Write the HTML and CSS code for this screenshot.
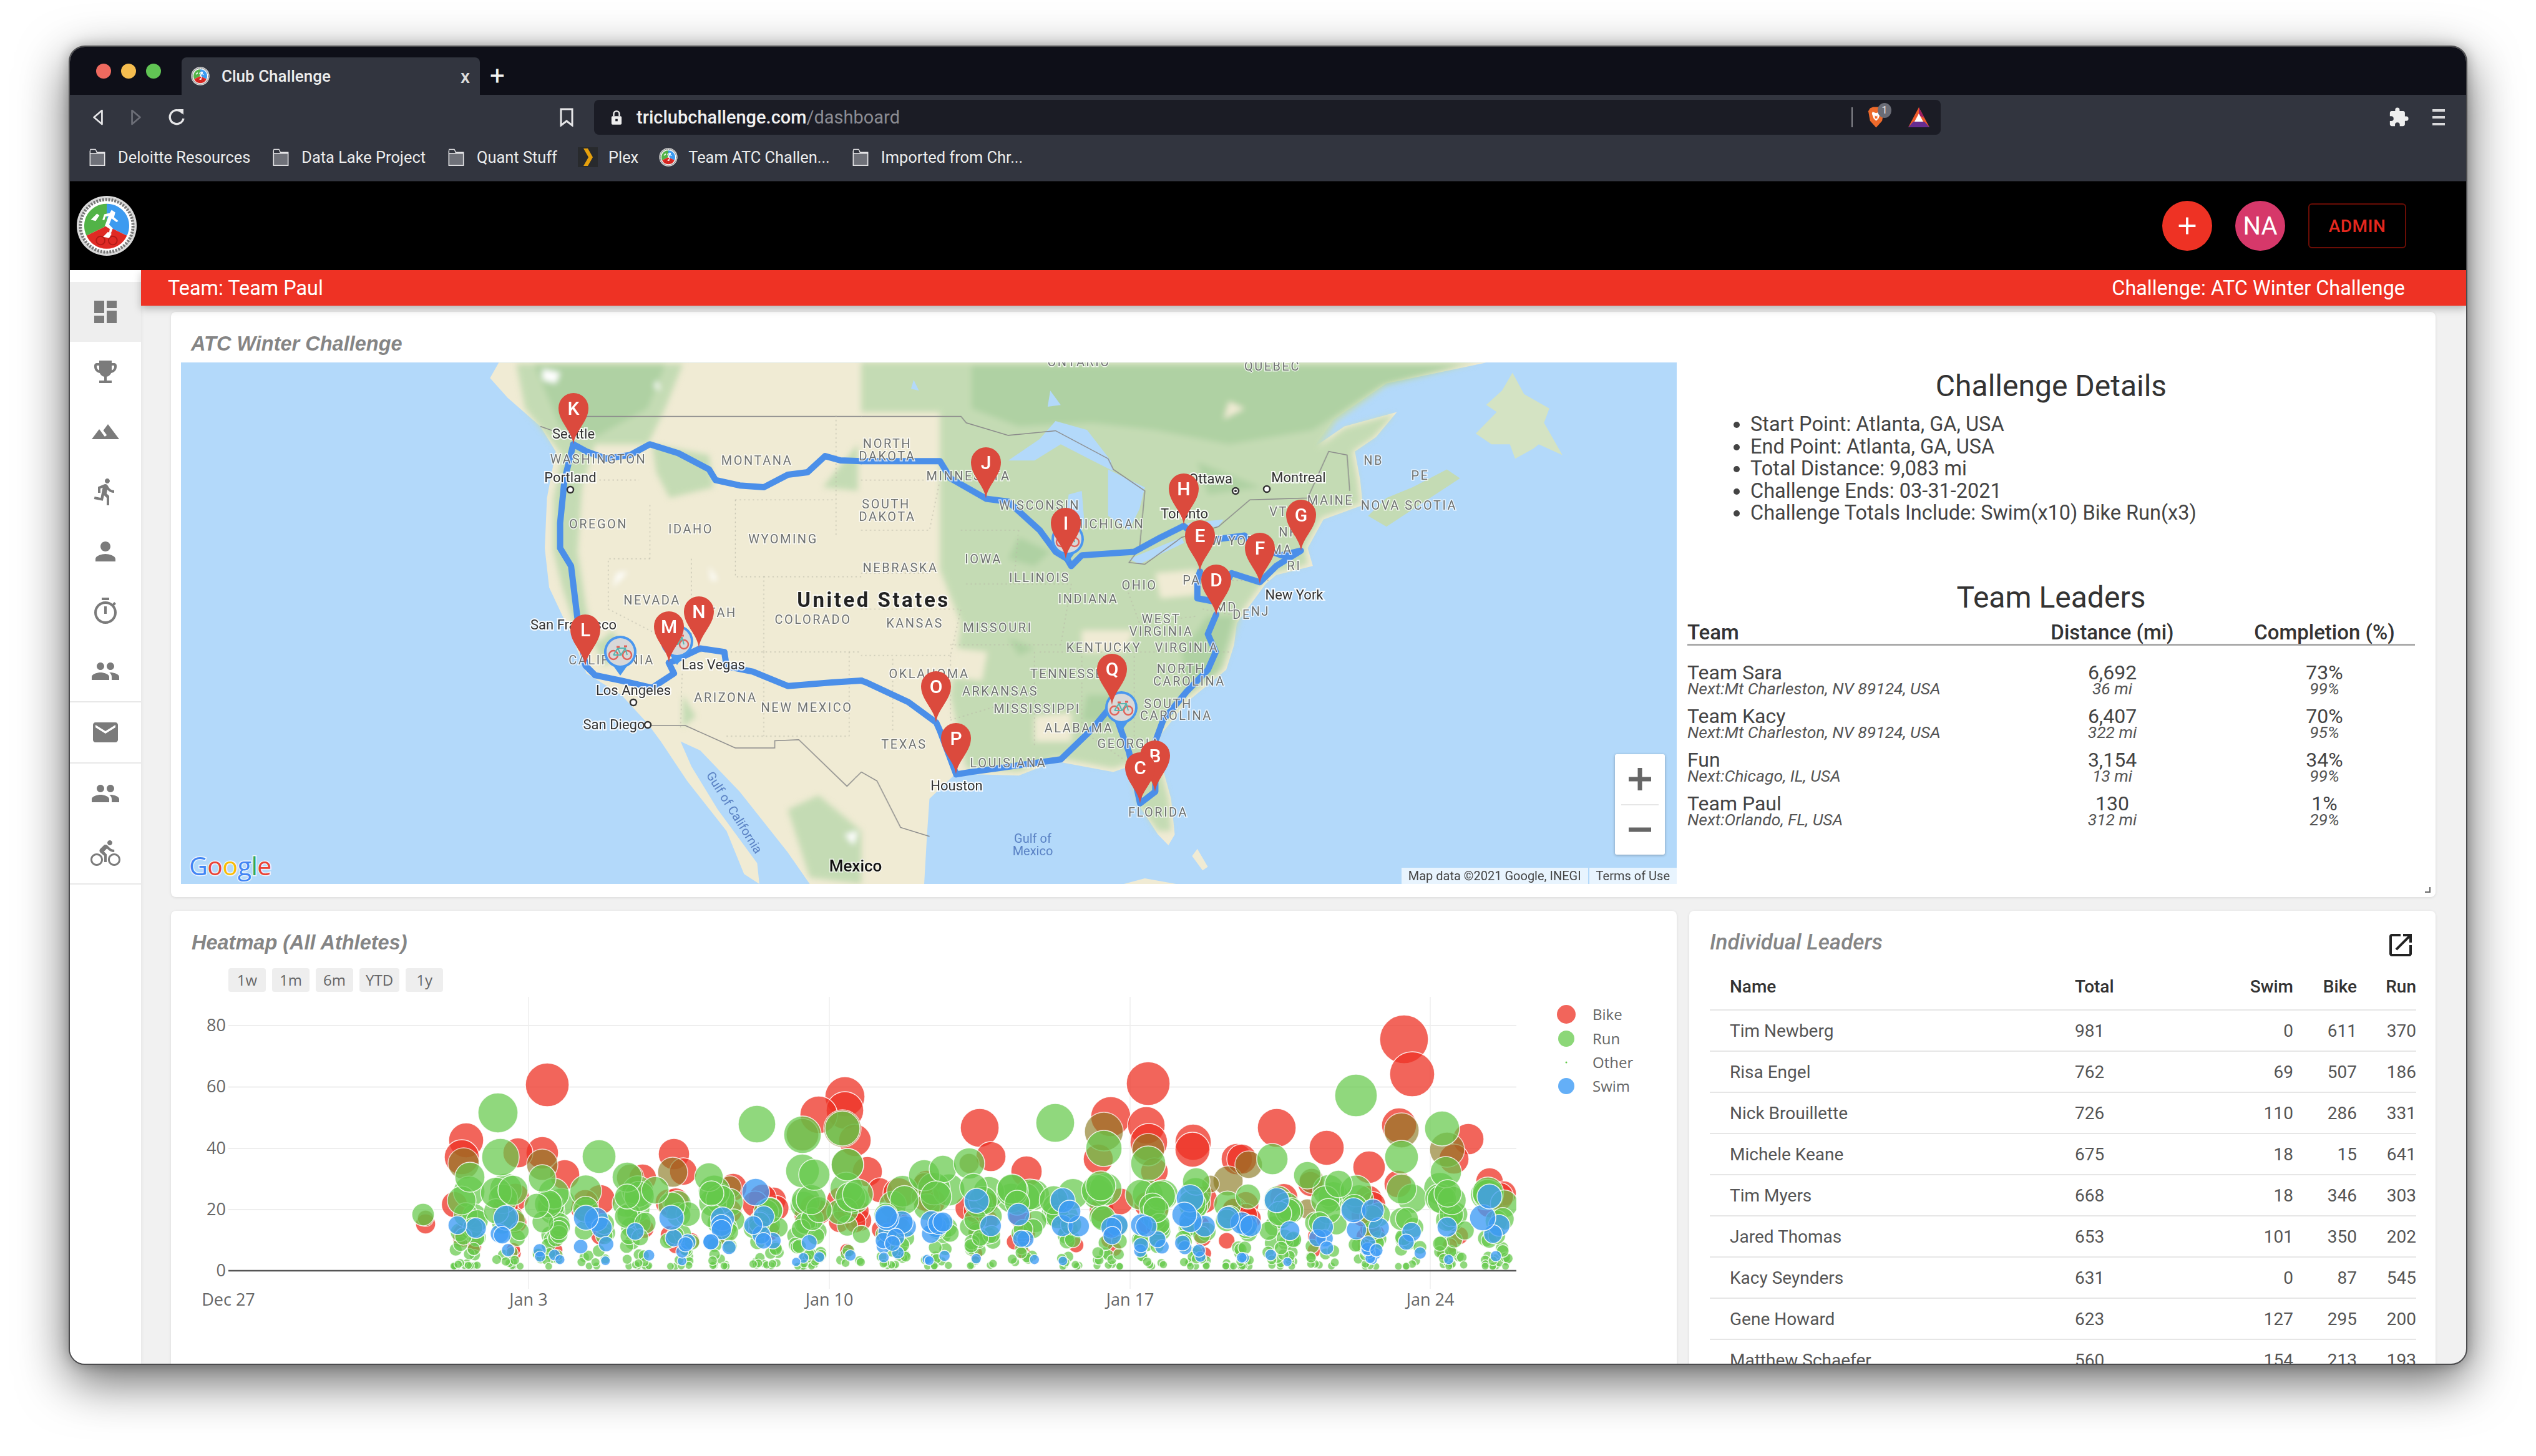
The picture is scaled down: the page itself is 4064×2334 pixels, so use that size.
FILE: index.html
```html
<!DOCTYPE html>
<html lang="en">
<head>
<meta charset="utf-8">
<title>Club Challenge</title>
<link rel="stylesheet" href="styles.css">
</head>
<body>
<svg class="defs" width="0" height="0" aria-hidden="true">
  <defs>
    <symbol id="atc" viewBox="0 0 100 100">
      <circle cx="50" cy="50" r="49" fill="#d9d9d9"/>
      <circle cx="50" cy="50" r="43" fill="#fff"/>
      <circle cx="50" cy="50" r="43" fill="none" stroke="#777" stroke-width="5" stroke-dasharray="3 2"/>
      <path d="M50 14 A36 36 0 0 0 17 66 L50 50Z" fill="#52b347"/>
      <path d="M50 14 A36 36 0 0 1 83 66 L50 50Z" fill="#3d9bf0"/>
      <path d="M17 66 A36 36 0 0 0 83 66 L50 50Z" fill="#df2a24"/>
      <path d="M58 24l6 4-2 8 7 6-3 2-8-6-4 10 6 6-3 8-3-1 1-6-8-5 6-16-5 1-2 6-3-1 3-9 9-2z" fill="#fff"/>
      <path d="M24 40l10-10 4 3-6 9z" fill="#fff"/>
      <circle cx="40" cy="74" r="7" fill="none" stroke="#b31b16" stroke-width="2"/>
      <circle cx="60" cy="74" r="7" fill="none" stroke="#b31b16" stroke-width="2"/>
      <path d="M44 68l8-8 6 3-4 7z" fill="#fff"/>
    </symbol>
    <symbol id="folder" viewBox="0 0 32 36">
      <path d="M1 6V35H31V8H15L12 2H2L1 6Z" fill="#6f7179" stroke="#e8e8ea" stroke-width="2"/>
      <path d="M1 10H31" stroke="#e8e8ea" stroke-width="2"/>
      <path d="M2 3H12L14 9H2Z" fill="#32353f"/>
    </symbol>
    <symbol id="pin" viewBox="-26 -84 52 86" overflow="visible">
      <path d="M0 0C-3-22-24-36-24-58A24 24 0 1 1 24-58C24-36 3-22 0 0Z" fill="#db4a3d"/>
    </symbol>
    <symbol id="bikeMark" viewBox="-28 -30 56 70" overflow="visible">
      <path d="M0 38L-10 24A26 26 0 1 1 10 24Z" fill="#4a97ee"/>
      <circle r="22" fill="#d8d8d8"/>
      <circle cx="-11" cy="5" r="7" fill="none" stroke="#e0635a" stroke-width="2.5"/>
      <circle cx="11" cy="5" r="7" fill="none" stroke="#e0635a" stroke-width="2.5"/>
      <path d="M-11 5L-4-6H8L11 5M-4-6L1 5H-11M8-6L1 5" fill="none" stroke="#58b6b0" stroke-width="2"/>
      <path d="M-6-8H-1M6-9H11" stroke="#e0635a" stroke-width="3"/>
    </symbol>
  </defs>
</svg>

<div class="window">
  <div class="tabstrip">
    <div class="lights"><i class="light red"></i><i class="light amber"></i><i class="light green"></i></div>
    <div class="tab">
      <svg class="fav"><use href="#atc"/></svg>
      <span class="tab-title">Club Challenge</span>
      <span class="tab-x">x</span>
    </div>
    <span class="tab-new">+</span>
  </div>

  <div class="chrome">
    <div class="toolbar">
      <div class="nav">
        <svg class="nav-ico" viewBox="0 0 24 30"><path d="M19 3L5 15l14 12Z" fill="none" stroke="#e6e6e8" stroke-width="3" stroke-linejoin="round"/></svg>
        <svg class="nav-ico" viewBox="0 0 24 30"><path d="M5 3l14 12L5 27Z" fill="none" stroke="#6c6e77" stroke-width="3" stroke-linejoin="round"/></svg>
        <svg class="nav-ico" viewBox="0 0 30 30"><path d="M24 8A11 11 0 1 0 26 17" fill="none" stroke="#e6e6e8" stroke-width="3.4"/><path d="M17 2l9 0 0 9Z" fill="#e6e6e8"/></svg>
      </div>
      <svg class="bm-ico" viewBox="0 0 22 30"><path d="M2 2H20V28L11 21 2 28Z" fill="none" stroke="#e6e6e8" stroke-width="3"/></svg>
      <div class="urlbar">
        <svg class="lock" viewBox="0 0 20 28"><path d="M5 12V8a5 5 0 0 1 10 0v4" fill="none" stroke="#eee" stroke-width="2.6"/><rect x="1" y="12" width="18" height="15" rx="2" fill="#eee"/><rect x="8" y="17" width="4" height="4" fill="#1b1c25"/></svg>
        <span class="url"><b>triclubchallenge.com</b><span class="url-path">/dashboard</span></span>
        <i class="url-sep"></i>
        <span class="brave">
          <svg class="brave-ico" viewBox="0 0 28 36"><path d="M4 3L9 1H19L24 3 27 8 24 24 14 35 4 24 1 8Z" fill="#ee6a2b"/><path d="M8 9l6 2 6-2 1 3-3 8-4 4-4-4-3-8Z" fill="#fff"/><path d="M12 15l2 2 2-2v5h-4Z" fill="#ee6a2b"/></svg>
          <span class="brave-badge">1</span>
        </span>
        <svg class="bat" viewBox="0 0 36 34"><path d="M18 1L35 33H1Z" fill="#ef5a2a"/><path d="M18 1L27 18 18 14Z" fill="#9e1f63"/><path d="M1 33L9 24H27L35 33Z" fill="#662d91"/><path d="M18 11L25 24H11Z" fill="#fff"/></svg>
      </div>
      <div class="tool-right">
        <svg class="puzzle" viewBox="0 0 24 24"><path d="M20.5 11H19V7c0-1.100-.9-2-2-2h-4V3.500a2.500 2.500 0 0 0-5 0V5H4c-1.100 0-2 .9-2 2v3.800h1.500a2.700 2.700 0 0 1 0 5.400H2V20c0 1.100.9 2 2 2h3.800v-1.500a2.700 2.700 0 0 1 5.400 0V22H17c1.100 0 2-.9 2-2v-4h1.500a2.500 2.500 0 0 0 0-5Z" fill="#eee"/></svg>
        <div class="burger"><i></i><i></i><i></i></div>
      </div>
    </div>
    <div class="bookmarks">
      <span class="bmk"><svg class="folder"><use href="#folder"/></svg>Deloitte Resources</span>
      <span class="bmk"><svg class="folder"><use href="#folder"/></svg>Data Lake Project</span>
      <span class="bmk"><svg class="folder"><use href="#folder"/></svg>Quant Stuff</span>
      <span class="bmk"><svg class="plex" viewBox="0 0 32 32"><rect width="32" height="32" fill="#282a2d"/><path d="M9 2h7l8 14-8 14H9l8-14Z" fill="#e5a00d"/></svg>Plex</span>
      <span class="bmk"><svg class="fav"><use href="#atc"/></svg>Team ATC Challen...</span>
      <span class="bmk"><svg class="folder"><use href="#folder"/></svg>Imported from Chr...</span>
    </div>
  </div>

  <header class="appbar">
    <svg class="logo"><use href="#atc"/></svg>
    <div class="appbar-actions">
      <button class="round add"><svg class="plus" viewBox="0 0 24 24"><path d="M19 13h-6v6h-2v-6H5v-2h6V5h2v6h6v2z" fill="#fff"/></svg></button>
      <span class="round avatar">NA</span>
      <button class="admin">ADMIN</button>
    </div>
  </header>

  <div class="app">
    <nav class="sidebar">
      <a class="item active"><svg class="ico" viewBox="0 0 24 24"><path d="M3 13h8V3H3v10zm0 8h8v-6H3v6zm10 0h8V11h-8v10zm0-18v6h8V3h-8z"/></svg></a>
      <a class="item"><svg class="ico" viewBox="0 0 24 24"><path d="M19 5h-2V3H7v2H5c-1.100 0-2 .9-2 2v1c0 2.550 1.920 4.630 4.390 4.940.63 1.500 1.980 2.630 3.610 2.960V19H7v2h10v-2h-4v-3.100c1.630-.33 2.980-1.460 3.610-2.960C19.080 12.630 21 10.550 21 8V7c0-1.100-.9-2-2-2zM5 8V7h2v3.820C5.840 10.400 5 9.300 5 8zm14 0c0 1.300-.84 2.400-2 2.820V7h2v1z"/></svg></a>
      <a class="item"><svg class="ico" viewBox="0 0 24 24"><path d="M14 6l-3.750 5 2.850 3.800-1.600 1.200C9.810 13.750 7 10 7 10l-6 8h22L14 6z"/></svg></a>
      <a class="item"><svg class="ico" viewBox="0 0 24 24"><path d="M13.490 5.480c1.100 0 2-.9 2-2s-.9-2-2-2-2 .9-2 2 .9 2 2 2zm-3.600 13.900l1-4.400 2.100 2v6h2v-7.500l-2.100-2 .6-3c1.300 1.500 3.300 2.500 5.500 2.500v-2c-1.900 0-3.500-1-4.300-2.400l-1-1.600c-.4-.6-1-1-1.700-1-.3 0-.5.1-.8.1l-5.200 2.200v4.700h2v-3.400l1.800-.7-1.600 8.100-4.900-1-.4 2 7 1.400z"/></svg></a>
      <a class="item"><svg class="ico" viewBox="0 0 24 24"><path d="M12 12c2.210 0 4-1.790 4-4s-1.790-4-4-4-4 1.790-4 4 1.790 4 4 4zm0 2c-2.670 0-8 1.340-8 4v2h16v-2c0-2.660-5.330-4-8-4z"/></svg></a>
      <a class="item"><svg class="ico" viewBox="0 0 24 24"><path d="M15 1H9v2h6V1zm-4 13h2V8h-2v6zm8.030-6.610l1.420-1.420c-.43-.51-.9-.99-1.410-1.410l-1.420 1.420C16.070 4.740 14.120 4 12 4c-4.970 0-9 4.030-9 9s4.020 9 9 9 9-4.030 9-9c0-2.120-.74-4.070-1.970-5.610zM12 20c-3.870 0-7-3.130-7-7s3.130-7 7-7 7 3.130 7 7-3.130 7-7 7z"/></svg></a>
      <a class="item"><svg class="ico" viewBox="0 0 24 24"><path d="M16 11c1.660 0 2.990-1.340 2.990-3S17.660 5 16 5c-1.660 0-3 1.340-3 3s1.340 3 3 3zm-8 0c1.660 0 2.990-1.340 2.990-3S9.660 5 8 5C6.340 5 5 6.340 5 8s1.340 3 3 3zm0 2c-2.330 0-7 1.170-7 3.500V19h14v-2.500c0-2.330-4.670-3.500-7-3.500zm8 0c-.29 0-.62.02-.97.05 1.160.84 1.970 1.970 1.970 3.450V19h6v-2.500c0-2.330-4.670-3.500-7-3.500z"/></svg></a>
      <hr class="rule">
      <a class="item"><svg class="ico" viewBox="0 0 24 24"><path d="M20 4H4c-1.100 0-1.990.9-1.990 2L2 18c0 1.100.9 2 2 2h16c1.100 0 2-.9 2-2V6c0-1.100-.9-2-2-2zm0 4l-8 5-8-5V6l8 5 8-5v2z"/></svg></a>
      <hr class="rule">
      <a class="item"><svg class="ico" viewBox="0 0 24 24"><path d="M16 11c1.660 0 2.990-1.340 2.990-3S17.660 5 16 5c-1.660 0-3 1.340-3 3s1.340 3 3 3zm-8 0c1.660 0 2.990-1.340 2.990-3S9.660 5 8 5C6.340 5 5 6.340 5 8s1.340 3 3 3zm0 2c-2.330 0-7 1.170-7 3.500V19h14v-2.500c0-2.330-4.670-3.500-7-3.500zm8 0c-.29 0-.62.02-.97.05 1.160.84 1.970 1.970 1.970 3.450V19h6v-2.500c0-2.330-4.670-3.500-7-3.500z"/></svg></a>
      <a class="item"><svg class="ico" viewBox="0 0 24 24"><path d="M15.500 5.500c1.100 0 2-.9 2-2s-.9-2-2-2-2 .9-2 2 .9 2 2 2zM5 12c-2.800 0-5 2.200-5 5s2.200 5 5 5 5-2.200 5-5-2.200-5-5-5zm0 8.500c-1.900 0-3.500-1.600-3.500-3.500s1.600-3.500 3.500-3.500 3.500 1.600 3.500 3.500-1.600 3.500-3.500 3.500zm5.800-10l2.400-2.400.8.8c1.300 1.300 3 2.100 5.100 2.100V9c-1.500 0-2.700-.6-3.600-1.500l-1.900-1.900c-.5-.4-1-.6-1.600-.6s-1.100.2-1.400.6L7.800 8.400c-.4.4-.6.9-.6 1.400 0 .6.2 1.100.6 1.400L11 14v5h2v-6.200l-2.200-2.300zM19 12c-2.800 0-5 2.200-5 5s2.200 5 5 5 5-2.200 5-5-2.200-5-5-5zm0 8.500c-1.900 0-3.500-1.600-3.500-3.500s1.600-3.500 3.500-3.500 3.500 1.600 3.500 3.500-1.600 3.500-3.500 3.500z"/></svg></a>
      <hr class="rule">
    </nav>

    <div class="content">
      <div class="teambar"><span>Team: Team Paul</span><span>Challenge: ATC Winter Challenge</span></div>
      <main class="grid">
        <section class="card map-card">
          <h3 class="title-bold map-title">ATC Winter Challenge</h3>
          <div class="map-row">
            <div class="map">
              <svg class="map-svg" viewBox="290 581 2397 836">
                <defs>
                  <filter id="soft" x="-5%" y="-5%" width="110%" height="110%"><feGaussianBlur stdDeviation="5"/></filter>
                </defs>
                <rect x="290" y="581" width="2397" height="836" fill="#b3d9fa"/>
                <g transform="translate(280 540) scale(.7018 .574)">
                  <path class="land" d="M740 72H1568V1528H1450L1400 1440 1290 1270 1200 1155 1155 1130 1180 1200 1240 1320 1330 1470 1335 1528 1300 1500 1260 1380 1170 1240 1110 1130 1080 1080 1020 1000 940 940 905 830 855 700 845 590 850 450 870 320 835 250 760 170 720 115Z"/>
                </g>
                <g transform="translate(1380 540) scale(.8418 .574)">
                  <path class="land" d="M0 72H1190L1000 130 900 230 860 310 920 250 1020 210 980 280 940 320 950 400 955 470 880 510 850 590 860 640 790 665 770 690 730 770 715 800 710 860 695 930 620 1020 560 1130 590 1290 597 1390 585 1420 565 1390 530 1310 510 1200 480 1215 370 1185 300 1225 180 1220 130 1290 125 1400 120 1528H0Z"/>
                  <path class="green" d="M965 500L1000 530 1140 395 1115 370 1050 420 1000 450Z"/>
                  <path class="pale" d="M1240 100L1262 160 1310 200 1300 240 1335 330 1290 300 1280 312 1245 340 1235 300 1200 300 1170 270 1210 210 1190 190 1220 150Z"/>
                  <path class="land" d="M640 1430L660 1480 650 1490 630 1450ZM500 1528L540 1512 600 1528Z"/>
                </g>
                <g filter="url(#soft)">
                  <g transform="translate(280 540) scale(.7018 .574)">
                    <path class="green" d="M780 76H1160L1120 200 1080 300 960 300 930 420 920 600 940 760 965 860 925 850 885 700 865 600 865 450 885 330 800 200Z"/>
                    <path class="green" d="M1090 300L1220 330 1230 420 1130 450 1100 380ZM1400 1320L1450 1510 1568 1528V1380L1470 1280ZM1000 820L1030 880 980 920 960 860ZM1160 1000L1190 1060 1160 1090ZM1560 300V430L1480 420Z"/>
                    <path class="greener" d="M820 76H1120L1080 200 960 280 880 250Z"/>
                    <path class="snow" d="M840 90L880 100 870 130 840 120ZM1100 120L1110 150 1095 140ZM1220 640L1240 680 1225 680ZM1010 660L1035 655 1000 700ZM1530 1390L1560 1380 1550 1420Z"/>
                  </g>
                  <g transform="translate(1380 540) scale(.8418 .574)">
                    <path class="green" d="M150 72H1170L1000 135 905 235 870 310 920 255 1015 215 975 280 935 320 945 400 950 465 875 505 845 590 850 635 785 660 765 685 725 765 705 860 690 925 615 1015 555 1130 585 1290 590 1380 565 1380 525 1300 510 1190 480 1205 370 1175 300 1215 200 1205 170 1000 190 800 150 650 150 400Z"/>
                    <path class="greener" d="M210 80H1140L990 135 860 260 700 300 560 260 440 240 300 250 210 200ZM660 780L710 780 680 940 620 990 610 880ZM280 840L330 870 300 890ZM640 350L760 420 660 440ZM300 560L360 600 330 640 280 620ZM430 1000L500 1000 480 1080 420 1070Z"/>
                    <path class="green" d="M0 72H200V210H0Z"/>
                    <path class="land" d="M700 180L730 200 690 230ZM420 820L520 820 500 880 420 880ZM180 870L240 880 230 960 170 950ZM330 1060L400 1050 400 1130 330 1130ZM560 660L640 650 640 720 570 730Z"/>
                  </g>
                </g>
                <g transform="translate(1380 540) scale(.8418 .574)" class="water">
                  <path d="M280 345L340 285 370 235 430 260 475 345 480 375 440 345 380 300 330 345Z"/>
                  <path d="M395 440L420 430 425 520 410 580 385 575 390 500Z"/>
                  <path d="M470 370L540 420 530 480 510 540 470 500 470 440Z"/>
                  <path d="M510 620L610 560 615 575 530 635Z"/>
                  <path d="M620 520L690 510 680 530 625 535Z"/>
                  <path d="M100 120L110 150 95 145ZM360 150L380 190 355 195Z"/>
                </g>
                <g class="border" transform="translate(280 540) scale(.7018 .574)">
                  <path d="M920 222H1568M835 250L870 265M1080 1085H1165L1280 1148H1370V1128L1425 1125 1535 1255 1568 1215"/>
                </g>
                <g class="border" transform="translate(1380 540) scale(.8418 .574)">
                  <path d="M0 222H190L200 240 280 275 370 262 470 340 480 370 540 430 530 590 510 630 540 635 610 560 680 530 740 455 850 450 890 320 925 330 930 430M0 1215L30 1240 75 1370 130 1395"/>
                </g>
                <g class="dash" transform="translate(280 540) scale(.7018 .574)">
                  <path d="M900 400H1060M1085 470V620M1085 620H990V760L1180 880M1180 620V870M1280 455V670H1345V880M1280 455H1510M1510 220V560M1345 670H1568M1160 880H1568M1345 880V1115M1540 880V1115M1160 880L1155 1090M1260 1115H1540"/>
                </g>
                <g class="dash" transform="translate(1380 540) scale(.8418 .574)">
                  <path d="M0 400H150M0 540H130L150 400M0 660H130M0 760H190L170 890H0M190 540H300M200 690H400M300 540L290 690M400 690L380 860M380 860H170M60 900V1100M170 890L170 1070M170 1070L330 1000M330 880V1140M420 880V1100M520 880V1130M340 880H700M420 1100L500 1180M640 680H780M650 760L720 780M500 680L530 800 640 780"/>
                </g>
                <polyline class="route" transform="translate(280 540) scale(.7018 .574)" points="910,300 940,320 985,340 1040,330 1085,300 1150,325 1220,370 1235,400 1290,415 1345,420 1400,385 1445,378 1485,333 1520,345 1568,347"/>
                <polyline class="route" transform="translate(280 540) scale(.7018 .574)" points="1568,960 1500,965 1400,975 1320,935 1260,920 1255,880 1200,870 1140,905 1128,910 1140,940 1090,980 1020,960 960,945 938,918 920,790 905,640 880,590 880,520 890,400 910,300"/>
                <polyline class="route" transform="translate(1380 540) scale(.8418 .574)" points="0,347 150,347 170,395 238,452 280,460 340,540 370,600 392,620 400,640 420,610 520,600 570,560 614,528 650,570 730,555 745,580 800,610 837,597 790,640 759,685 705,660 676,740 640,730 640,680 645,655"/>
                <polyline class="route" transform="translate(1380 540) scale(.8418 .574)" points="676,775 660,830 675,880 660,930 620,990 575,1070 560,1130 560,1270 531,1303 510,1160 495,1100 478,1028 440,1095 380,1180 210,1215 181,1222 150,1100 143,1077 90,1020 10,965 0,960"/>

                <g class="lab-st">
                  <text x="959" y="743">WASHINGTON</text><text x="959" y="847">OREGON</text><text x="1107" y="855">IDAHO</text><text x="1213" y="745">MONTANA</text><text x="1255" y="871">WYOMING</text><text x="1045" y="969">NEVADA</text><text x="1150" y="989">UTAH</text><text x="1303" y="1000">COLORADO</text><text x="980" y="1065">CALIFORNIA</text><text x="1163" y="1125">ARIZONA</text><text x="1293" y="1141">NEW MEXICO</text>
                  <text x="1422" y="718">NORTH</text><text x="1422" y="738">DAKOTA</text><text x="1420" y="815">SOUTH</text><text x="1422" y="835">DAKOTA</text><text x="1552" y="770">MINNESOTA</text><text x="1666" y="817">WISCONSIN</text><text x="1776" y="847">MICHIGAN</text><text x="1576" y="903">IOWA</text><text x="1443" y="917">NEBRASKA</text><text x="1666" y="933">ILLINOIS</text><text x="1826" y="945">OHIO</text><text x="1744" y="967">INDIANA</text><text x="1466" y="1006">KANSAS</text><text x="1599" y="1013">MISSOURI</text><text x="1861" y="999">WEST</text><text x="1861" y="1019">VIRGINIA</text><text x="1769" y="1045">KENTUCKY</text><text x="1902" y="1045">VIRGINIA</text><text x="1489" y="1087">OKLAHOMA</text><text x="1717" y="1087">TENNESSEE</text><text x="1893" y="1079">NORTH</text><text x="1906" y="1099">CAROLINA</text><text x="1603" y="1115">ARKANSAS</text><text x="1662" y="1143">MISSISSIPPI</text><text x="1872" y="1135">SOUTH</text><text x="1885" y="1154">CAROLINA</text><text x="1729" y="1174">ALABAMA</text><text x="1449" y="1200">TEXAS</text><text x="1809" y="1199">GEORGIA</text><text x="1616" y="1230">LOUISIANA</text><text x="1856" y="1309">FLORIDA</text>
                  <text x="1910" y="937">PA</text><text x="1965" y="980">MD</text><text x="1990" y="992">DE</text><text x="2020" y="987">NJ</text><text x="1969" y="874">NEW YORK</text><text x="2049" y="827">VT</text><text x="2066" y="860">NH</text><text x="2054" y="888">MA</text><text x="2074" y="914">RI</text><text x="2132" y="809">MAINE</text><text x="2201" y="745">NB</text><text x="2276" y="769">PE</text><text x="2258" y="817">NOVA SCOTIA</text><text x="2039" y="594">QUEBEC</text><text x="1729" y="587">ONTARIO</text>
                </g>
                <g class="lab-city">
                  <text x="919" y="703">Seattle</text><text x="914" y="773">Portland</text><text x="919" y="1009">San Francisco</text><text x="1143" y="1073">Las Vegas</text><text x="1015" y="1114">Los Angeles</text><text x="984" y="1169">San Diego</text><text x="1533" y="1267">Houston</text><text x="2074" y="961">New York</text><text x="1940" y="775">Ottawa</text><text x="2081" y="773">Montreal</text><text x="1898" y="831">Toronto</text>
                </g>
                <circle class="dot" cx="1015" cy="1126" r="5"/><circle class="dot" cx="1038" cy="1162" r="5"/><circle class="dot" cx="914" cy="785" r="5"/><circle class="dot" cx="1980" cy="787" r="5"/><circle class="dot-in" cx="1980" cy="787" r="2"/><circle class="dot" cx="2030" cy="784" r="5"/>
                <text class="lab-big" x="1400" y="973">United States</text>
                <text class="lab-mx" x="1371" y="1397">Mexico</text>
                <text class="lab-blue" x="0" y="0" transform="translate(1171 1306) rotate(58)">Gulf of California</text>
                <text class="lab-blue" x="1655" y="1351">Gulf of</text>
                <text class="lab-blue" x="1655" y="1371">Mexico</text>

                <use href="#bikeMark" x="994" y="1045" width="56" height="70" transform="translate(-28 -30)"/>
                <use href="#bikeMark" x="1085" y="1028" width="56" height="70" transform="translate(-28 -30)"/>
                <use href="#bikeMark" x="1711" y="864" width="56" height="70" transform="translate(-28 -30)"/>
                <use href="#bikeMark" x="1797" y="1134" width="56" height="70" transform="translate(-28 -30)"/>

                <g transform="translate(919 712)"><use href="#pin" x="-26" y="-84" width="52" height="86"/><text class="pin-t" y="-47">K</text></g>
                <g transform="translate(1580 799)"><use href="#pin" x="-26" y="-84" width="52" height="86"/><text class="pin-t" y="-47">J</text></g>
                <g transform="translate(1708 896)"><use href="#pin" x="-26" y="-84" width="52" height="86"/><text class="pin-t" y="-47">I</text></g>
                <g transform="translate(1897 841)"><use href="#pin" x="-26" y="-84" width="52" height="86"/><text class="pin-t" y="-47">H</text></g>
                <g transform="translate(2085 883)"><use href="#pin" x="-26" y="-84" width="52" height="86"/><text class="pin-t" y="-47">G</text></g>
                <g transform="translate(2019 936)"><use href="#pin" x="-26" y="-84" width="52" height="86"/><text class="pin-t" y="-47">F</text></g>
                <g transform="translate(1923 916)"><use href="#pin" x="-26" y="-84" width="52" height="86"/><text class="pin-t" y="-47">E</text></g>
                <g transform="translate(1949 987)"><use href="#pin" x="-26" y="-84" width="52" height="86"/><text class="pin-t" y="-47">D</text></g>
                <g transform="translate(938 1067)"><use href="#pin" x="-26" y="-84" width="52" height="86"/><text class="pin-t" y="-47">L</text></g>
                <g transform="translate(1120 1038)"><use href="#pin" x="-26" y="-84" width="52" height="86"/><text class="pin-t" y="-47">N</text></g>
                <g transform="translate(1072 1062)"><use href="#pin" x="-26" y="-84" width="52" height="86"/><text class="pin-t" y="-47">M</text></g>
                <g transform="translate(1500 1158)"><use href="#pin" x="-26" y="-84" width="52" height="86"/><text class="pin-t" y="-47">O</text></g>
                <g transform="translate(1532 1241)"><use href="#pin" x="-26" y="-84" width="52" height="86"/><text class="pin-t" y="-47">P</text></g>
                <g transform="translate(1782 1130)"><use href="#pin" x="-26" y="-84" width="52" height="86"/><text class="pin-t" y="-47">Q</text></g>
                <g transform="translate(1851 1269)"><use href="#pin" x="-26" y="-84" width="52" height="86"/><text class="pin-t" y="-47">B</text></g>
                <g transform="translate(1827 1288)"><use href="#pin" x="-26" y="-84" width="52" height="86"/><text class="pin-t" y="-47">C</text></g>

                <text class="google" x="303" y="1403"><tspan fill="#4285f4">G</tspan><tspan fill="#ea4335">o</tspan><tspan fill="#fbbc05">o</tspan><tspan fill="#4285f4">g</tspan><tspan fill="#34a853">l</tspan><tspan fill="#ea4335">e</tspan></text>
              </svg>
              <div class="zoomctl">
                <button class="zoombtn"><svg class="zoomico" viewBox="0 0 36 36"><path d="M14.500 0h7v14.500H36v7H21.500V36h-7V21.500H0v-7h14.500Z"/></svg></button>
                <i class="zoomsep"></i>
                <button class="zoombtn"><svg class="zoomico" viewBox="0 0 36 36"><path d="M0 14.500h36v7H0Z"/></svg></button>
              </div>
              <div class="attrib"><span>Map data ©2021 Google, INEGI</span><span>Terms of Use</span></div>
            </div>
            <aside class="details">
              <h2 class="h-center">Challenge Details</h2>
              <ul class="facts">
                <li>Start Point: Atlanta, GA, USA</li>
                <li>End Point: Atlanta, GA, USA</li>
                <li>Total Distance: 9,083 mi</li>
                <li>Challenge Ends: 03-31-2021</li>
                <li>Challenge Totals Include: Swim(x10) Bike Run(x3)</li>
              </ul>
              <h2 class="h-center h-second">Team Leaders</h2>
              <div class="teams">
                <div class="teams-head"><span>Team</span><span class="ctr">Distance (mi)</span><span class="ctr">Completion (%)</span></div>
                <div class="team"><div><div class="main-t">Team Sara</div><div class="sub-t">Next:Mt Charleston, NV 89124, USA</div></div><div class="ctr"><div class="main-t">6,692</div><div class="sub-t">36 mi</div></div><div class="ctr"><div class="main-t">73%</div><div class="sub-t">99%</div></div></div>
                <div class="team"><div><div class="main-t">Team Kacy</div><div class="sub-t">Next:Mt Charleston, NV 89124, USA</div></div><div class="ctr"><div class="main-t">6,407</div><div class="sub-t">322 mi</div></div><div class="ctr"><div class="main-t">70%</div><div class="sub-t">95%</div></div></div>
                <div class="team"><div><div class="main-t">Fun</div><div class="sub-t">Next:Chicago, IL, USA</div></div><div class="ctr"><div class="main-t">3,154</div><div class="sub-t">13 mi</div></div><div class="ctr"><div class="main-t">34%</div><div class="sub-t">99%</div></div></div>
                <div class="team"><div><div class="main-t">Team Paul</div><div class="sub-t">Next:Orlando, FL, USA</div></div><div class="ctr"><div class="main-t">130</div><div class="sub-t">312 mi</div></div><div class="ctr"><div class="main-t">1%</div><div class="sub-t">29%</div></div></div>
              </div>
            </aside>
          </div>
          <svg class="resize" viewBox="0 0 12 12"><path d="M10 2V10H2" fill="none" stroke="#666" stroke-width="2"/></svg>
        </section>

        <section class="card heat-card">
          <h3 class="title-bold heat-title">Heatmap (All Athletes)</h3>
          <div class="ranges"><span class="range">1w</span><span class="range">1m</span><span class="range">6m</span><span class="range">YTD</span><span class="range">1y</span></div>
          <svg id="chart" class="chart" viewBox="274 1596 2413 560">
            <defs><clipPath id="plot"><rect x="366" y="1596" width="2064" height="443"/></clipPath></defs>
            <g class="gridlines">
              <path d="M847 1600V2068M1329 1600V2068M1811 1600V2068M2292 1600V2068"/>
              <path d="M366 1646H2430M366 1744.500H2430M366 1843H2430M366 1941H2430"/>
            </g>
            <g id="bubbles" clip-path="url(#plot)"></g>
            <path class="axis0" d="M366 2039H2430"/>
            <g class="ylab"><text x="362" y="1655">80</text><text x="362" y="1753">60</text><text x="362" y="1852">40</text><text x="362" y="1950">20</text><text x="362" y="2048">0</text></g>
            <g class="xlab"><text x="366" y="2095">Dec 27</text><text x="847" y="2095">Jan 3</text><text x="1329" y="2095">Jan 10</text><text x="1811" y="2095">Jan 17</text><text x="2292" y="2095">Jan 24</text></g>
            <g class="legend">
              <circle cx="2510" cy="1628" r="15" fill="#ee3224" fill-opacity=".75"/><text x="2552" y="1637">Bike</text>
              <circle cx="2510" cy="1667" r="13" fill="#65c94b" fill-opacity=".75"/><text x="2552" y="1676">Run</text>
              <circle cx="2510" cy="1705" r="1.500" fill="#65c94b"/><text x="2552" y="1714">Other</text>
              <circle cx="2510" cy="1743" r="13" fill="#3d9bf5" fill-opacity=".8"/><text x="2552" y="1752">Swim</text>
            </g>
          </svg>
        </section>

        <section class="card lead-card">
          <div class="lead-head">
            <h3 class="title-med">Individual Leaders</h3>
            <svg class="open" viewBox="3 3 18 18"><path d="M19 19H5V5h7V3H5c-1.110 0-2 .9-2 2v14c0 1.100.89 2 2 2h14c1.100 0 2-.9 2-2v-7h-2v7zM14 3v2h3.590l-9.830 9.830 1.410 1.410L19 6.410V10h2V3h-7z"/></svg>
          </div>
          <table class="leaders">
            <colgroup><col class="c-name"><col class="c-total"><col class="c-swim"><col class="c-bike"><col class="c-run"></colgroup>
            <thead><tr><th class="name">Name</th><th>Total</th><th class="num">Swim</th><th class="num">Bike</th><th class="num">Run</th></tr></thead>
            <tbody>
              <tr><td class="name">Tim Newberg</td><td>981</td><td class="num">0</td><td class="num">611</td><td class="num">370</td></tr>
              <tr><td class="name">Risa Engel</td><td>762</td><td class="num">69</td><td class="num">507</td><td class="num">186</td></tr>
              <tr><td class="name">Nick Brouillette</td><td>726</td><td class="num">110</td><td class="num">286</td><td class="num">331</td></tr>
              <tr><td class="name">Michele Keane</td><td>675</td><td class="num">18</td><td class="num">15</td><td class="num">641</td></tr>
              <tr><td class="name">Tim Myers</td><td>668</td><td class="num">18</td><td class="num">346</td><td class="num">303</td></tr>
              <tr><td class="name">Jared Thomas</td><td>653</td><td class="num">101</td><td class="num">350</td><td class="num">202</td></tr>
              <tr><td class="name">Kacy Seynders</td><td>631</td><td class="num">0</td><td class="num">87</td><td class="num">545</td></tr>
              <tr><td class="name">Gene Howard</td><td>623</td><td class="num">127</td><td class="num">295</td><td class="num">200</td></tr>
              <tr><td class="name">Matthew Schaefer</td><td>560</td><td class="num">154</td><td class="num">213</td><td class="num">193</td></tr>
            </tbody>
          </table>
        </section>
      </main>
    </div>
  </div>
</div>
<script src="chart.js"></script>
</body>
</html>
```
FILE: styles.css
```css
* { box-sizing: border-box; }
html, body { margin: 0; height: 2334px; width: 4064px; overflow: hidden; background: #fff; }
body { padding: 73px 0 0 110px; font-family: Roboto, "Liberation Sans", sans-serif; color: #333; }
.defs { position: absolute; }

.window { width: 3844px; height: 2115px; border: 2px solid #4c4c4e; border-radius: 26px; overflow: hidden; display: flex; flex-direction: column; background: #f1f1f1; box-shadow: 0 26px 80px rgba(0,0,0,.6), 0 0 20px rgba(0,0,0,.25); }

.tabstrip { height: 77px; flex: none; background: #0e0f18; display: flex; align-items: flex-end; padding-left: 42px; }
.lights { display: flex; gap: 16px; align-self: flex-start; margin-top: 27px; width: 137px; }
.light { width: 24px; height: 24px; border-radius: 50%; }
.light.red { background: #ee6a5f; }
.light.amber { background: #f5bd4f; }
.light.green { background: #61c454; }
.tab { width: 478px; height: 60px; background: #32353f; border-radius: 8px 8px 0 0; display: flex; align-items: center; padding: 0 16px 0 15px; color: #eceded; font-size: 26px; font-weight: 500; }
.fav { width: 30px; height: 32px; flex: none; }
.tab-title { margin-left: 19px; flex: 1; }
.tab-x { font-size: 30px; color: #ddd; }
.tab-new { color: #f2f2f2; font-size: 42px; line-height: 60px; margin-left: 16px; font-weight: 400; }

.chrome { height: 138px; flex: none; background: #32353f; display: flex; flex-direction: column; }
.toolbar { height: 72px; flex: none; display: flex; align-items: center; padding: 0 34px 0 34px; }
.nav { display: flex; align-items: center; width: 752px; gap: 39px; }
.nav-ico { width: 22px; height: 28px; }
.nav-ico:last-child { width: 30px; height: 30px; }
.bm-ico { width: 22px; height: 30px; flex: none; margin-left: -1px; }
.urlbar { width: 2158px; height: 56px; margin-left: 33px; background: #1b1c25; border-radius: 8px; display: flex; align-items: center; padding: 0 17px 0 27px; flex: none; }
.lock { width: 18px; height: 26px; flex: none; }
.url { margin-left: 23px; font-size: 29px; color: #8b8c93; flex: 1; }
.url b { font-weight: 500; color: #f0f0f0; }
.url-path { color: #8b8c93; }
.url-sep { width: 2px; height: 32px; background: #85868c; }
.brave { position: relative; display: flex; margin-left: 24px; }
.brave-ico { width: 27px; height: 36px; }
.brave-badge { position: absolute; left: 16px; top: -5px; width: 22px; height: 24px; border-radius: 50%; background: #6a6c76; color: #eee; font-size: 16px; line-height: 24px; text-align: center; }
.bat { width: 36px; height: 34px; margin-left: 37px; }
.tool-right { margin-left: auto; display: flex; align-items: center; gap: 37px; }
.puzzle { width: 34px; height: 34px; }
.burger { width: 20px; display: flex; flex-direction: column; gap: 7px; }
.burger i { height: 4px; background: #d8d8da; }

.bookmarks { height: 56px; flex: none; display: flex; align-items: center; padding-left: 28px; gap: 33px; color: #eceded; font-size: 25.400px; font-weight: 400; }
.bmk { display: flex; align-items: center; gap: 17px; white-space: nowrap; }
.folder { width: 32px; height: 28px; flex: none; }
.plex { width: 32px; height: 32px; flex: none; }

.appbar { height: 143px; flex: none; background: #000; display: flex; align-items: center; justify-content: space-between; padding: 0 96px 0 10px; border-top: 1px solid #18181c; }
.logo { width: 98px; height: 98px; }
.appbar-actions { display: flex; align-items: center; gap: 37px; }
.round { width: 80px; height: 80px; border-radius: 50%; display: flex; align-items: center; justify-content: center; border: 0; padding: 0; color: #fff; }
.add { background: #ee3224; }
.plus { width: 46px; height: 46px; }
.avatar { background: #d6386a; font-size: 40px; }
.admin { width: 157px; height: 72px; margin-left: 0; background: transparent; border: 2px solid #6b0d05; border-radius: 6px; color: #e5281e; font: 500 28px Roboto, sans-serif; letter-spacing: .5px; padding: 0; }

.app { flex: 1; min-height: 0; display: flex; }
.sidebar { width: 114px; flex: none; background: #fff; padding-top: 19px; display: flex; flex-direction: column; align-items: stretch; box-shadow: 0 0 6px rgba(0,0,0,.08); z-index: 1; }
.item { height: 96px; flex: none; display: flex; align-items: center; justify-content: center; }
.item.active { background: #eeeeee; }
.ico { width: 48px; height: 48px; fill: #7b7b7b; }
.rule { margin: 0; border: 0; height: 2px; flex: none; background: #e8e8e8; }

.content { flex: 1; min-width: 0; display: flex; flex-direction: column; }
.teambar { height: 57px; flex: none; background: #ee3224; color: #fff; font-size: 32.400px; display: flex; align-items: center; justify-content: space-between; padding: 0 98px 0 43px; box-shadow: 0 5px 12px rgba(0,0,0,.25); z-index: 1; }
.grid { flex: 1; min-height: 0; overflow: hidden; display: grid; grid-template-columns: 2413px 1196px; grid-template-rows: 938px 900px; column-gap: 20px; row-gap: 22px; padding: 10px 0 0 48px; }
.card { background: #fff; border-radius: 8px; box-shadow: 0 1px 4px rgba(0,0,0,.1); position: relative; }
.map-card { grid-column: 1 / 3; padding: 0 33px 21px 16px; display: flex; flex-direction: column; }
.title-bold { margin: 0; font: italic 700 32.500px/40px "Liberation Sans", Arial, sans-serif; color: #858585; }
.title-med { margin: 0; font: italic 500 35px/40px Roboto, sans-serif; color: #858585; }
.map-title { height: 81px; padding: 31px 0 0 16px; }
.map-row { flex: 1; display: flex; min-height: 0; }
.map { width: 2397px; height: 836px; position: relative; flex: none; overflow: hidden; }
.map-svg { display: block; width: 2397px; height: 836px; }
.land { fill: #f0ebd4; }
.green { fill: #c4dbb4; }
.greener { fill: #afd1a3; }
.pale { fill: #d4e3c3; }
.snow { fill: #fff; }
.water path { fill: #b3d9fa; }
.border path { fill: none; stroke: #8b8b8b; stroke-width: 1.500px; vector-effect: non-scaling-stroke; }
.dash path { fill: none; stroke: #b9b8a8; stroke-width: 1.200px; stroke-dasharray: 2 5; vector-effect: non-scaling-stroke; }
.route { fill: none; stroke: #4b8fe9; stroke-width: 10px; stroke-linejoin: round; stroke-linecap: round; vector-effect: non-scaling-stroke; }
.lab-st text { font: 400 20px Roboto, sans-serif; letter-spacing: 2.500px; fill: #6f7271; text-anchor: middle; stroke: rgba(255,255,255,.75); stroke-width: 3px; paint-order: stroke; }
.lab-city text { font: 400 22px Roboto, sans-serif; fill: #333; text-anchor: middle; stroke: rgba(255,255,255,.85); stroke-width: 4px; paint-order: stroke; }
.lab-big { font: 700 33px Roboto, sans-serif; letter-spacing: 3.500px; fill: #222; text-anchor: middle; stroke: rgba(255,255,255,.8); stroke-width: 4px; paint-order: stroke; }
.lab-mx { font: 500 26px Roboto, sans-serif; fill: #111; text-anchor: middle; stroke: rgba(255,255,255,.7); stroke-width: 3px; paint-order: stroke; }
.lab-blue { font: 400 20px Roboto, sans-serif; fill: #5a82c4; text-anchor: middle; }
.dot { fill: #fff; stroke: #333; stroke-width: 2.500px; }
.dot-in { fill: #333; }
.pin-t { font: 500 30px Roboto, sans-serif; fill: #fff; text-anchor: middle; }
.google { font: 400 41px "Open Sans", "Liberation Sans", sans-serif; stroke: rgba(255,255,255,.8); stroke-width: 3px; paint-order: stroke; letter-spacing: -.5px; }
.zoomctl { position: absolute; left: 2298px; top: 628px; width: 80px; height: 161px; background: #fff; border-radius: 3px; box-shadow: 0 1px 4px rgba(0,0,0,.3); display: flex; flex-direction: column; align-items: center; }
.zoombtn { flex: 1; width: 100%; border: 0; background: none; padding: 0; display: flex; align-items: center; justify-content: center; }
.zoomico { width: 36px; height: 36px; fill: #666; }
.zoomsep { width: 60px; height: 2px; background: #e6e6e6; flex: none; }
.attrib { position: absolute; right: 0; bottom: 0; height: 26px; display: flex; font-size: 20px; line-height: 26px; color: #444; gap: 2px; }
.attrib span { background: rgba(255,255,255,.7); padding: 0 11px; }

.details { flex: 1; min-width: 0; padding-left: 17px; }
.h-center { margin: 12px 0 0; text-align: center; font-weight: 400; font-size: 48px; line-height: 52px; color: #333; }
.h-second { margin-top: 91px; }
.facts { margin: 18px 0 0; padding: 0 0 0 101px; font-size: 32.500px; line-height: 35.600px; color: #444; }
.teams { margin-top: 10px; font-size: 30px; }
.teams-head { display: grid; grid-template-columns: 486px 390px 290px; height: 41px; align-items: end; border-bottom: 3px solid #aaa; font-weight: 500; color: #333; font-size: 33px; line-height: 40px; }
.team { display: grid; grid-template-columns: 486px 390px 290px; margin-top: 18px; }
.teams-head + .team { margin-top: 28px; }
.ctr { text-align: center; }
.main-t { font-size: 32px; line-height: 30px; color: #444; }
.sub-t { font-size: 26.500px; line-height: 22px; font-style: italic; color: #555; }
.resize { position: absolute; right: 7px; bottom: 6px; width: 12px; height: 12px; }

.heat-card { overflow: hidden; }
.heat-title { padding: 31px 0 0 33px; }
.ranges { display: flex; gap: 10px; margin: 21px 0 0 92px; }
.range { height: 38px; min-width: 60px; padding: 0 10px; background: #eee; border-radius: 4px; font: 400 24px/38px "Open Sans", sans-serif; color: #666; text-align: center; }
.chart { display: block; width: 2413px; height: 560px; margin-top: 4px; }
.gridlines path { fill: none; stroke: #eee; stroke-width: 2px; }
.gridlines path:first-child { stroke-width: 1.500px; }
.axis0 { stroke: #555; stroke-width: 2.500px; fill: none; }
.ylab text, .xlab text { font: 400 27px "Open Sans", sans-serif; fill: #666; }
.legend text { font: 400 24px "Open Sans", sans-serif; fill: #666; }
.ylab text { text-anchor: end; }
.xlab text { text-anchor: middle; }
.b-red { fill: #ee3224; fill-opacity: .75; stroke: #fff; stroke-opacity: .85; stroke-width: 1.500px; }
.b-green { fill: #65c94b; fill-opacity: .72; stroke: #fff; stroke-opacity: .8; stroke-width: 1.500px; }
.b-dark { fill: #8a7a22; fill-opacity: .65; stroke: #fff; stroke-opacity: .7; stroke-width: 1.500px; }
.b-blue { fill: #3d9bf5; fill-opacity: .78; stroke: #fff; stroke-opacity: .85; stroke-width: 1.500px; }

.lead-card { padding: 31px 31px 0 33px; overflow: hidden; }
.lead-head { display: flex; justify-content: space-between; align-items: flex-start; height: 40px; }
.open { width: 36px; height: 36px; margin: 6px 7px 0 0; fill: #222; }
.leaders { margin-top: 14px; width: 1132px; table-layout: fixed; border-collapse: collapse; font-size: 28px; color: #555; }
.c-name { width: 585px; }
.c-total { width: 200px; }
.c-swim { width: 150px; }
.c-bike { width: 102px; }
.c-run { width: 95px; }
.leaders th { height: 74px; padding: 0; text-align: left; font-weight: 500; color: #333; border-bottom: 2px solid #e6e6e6; }
.leaders td { height: 66px; padding: 0; border-bottom: 2px solid #e6e6e6; }
.leaders .name { padding-left: 32px; }
.leaders .num { text-align: right; }
```
FILE: chart.js
```javascript
// Hand-read large bubbles plus a seeded fill of the small daily activities.
(function () {
  var NS = 'http://www.w3.org/2000/svg';
  var root = document.getElementById('bubbles');
  var seed = 20210127;
  function rnd() { seed = (seed * 1664525 + 1013904223) >>> 0; return seed / 4294967296; }
  function add(cls, c) {
    var el = document.createElementNS(NS, 'circle');
    el.setAttribute('class', cls);
    el.setAttribute('cx', c[0]); el.setAttribute('cy', c[1]); el.setAttribute('r', c[2]);
    root.appendChild(el);
  }
  // x of a random activity: activities bunch around one spot per day
  function dayX() {
    var day = Math.floor(rnd() * 25);
    return 745 + day * 68.8 + (rnd() - 0.5) * 42;
  }
  var red = [[682,1964,16],[877,1741,35],[747,1830,28],[740,1857,28],[869,1850,26],[1080,1852,25],[1354,1760,32],[1354,1782,30],[1312,1789,30],[1570,1810,31],[1588,1856,24],[1645,1880,25],[1780,1792,32],[1840,1739,35],[1837,1806,30],[1841,1833,30],[1912,1833,29],[1911,1845,28],[1982,1860,25],[2046,1810,31],[2126,1842,28],[2194,1873,26],[2250,1668,39],[2263,1724,36],[2242,1806,28],[2353,1828,25],[2387,1896,22],[830,1850,24],[905,1885,24],[962,1925,24],[1030,1890,22],[1095,1880,22],[1175,1905,22],[1240,1925,20],[1370,1830,26],[1390,1880,24],[1410,1910,20],[1440,1915,25],[1485,1900,22],[2410,1915,20],[2330,1860,24],[1760,1860,24],[1850,1880,22],[1990,1860,24],[2100,1900,20],[2240,1900,22]];
  var dark = [[743,1867,25],[682,1955,13],[869,1869,25],[1078,1881,24],[1350,1811,30],[1286,1821,26],[1358,1869,26],[1010,1890,22],[1170,1905,18],[1481,1900,18],[1553,1867,16],[1769,1816,31],[1840,1845,26],[1968,1895,24],[2001,1869,22],[2102,1895,20],[2246,1814,28],[2319,1845,28],[2095,1940,16],[1585,1930,16],[1940,1900,14]];
  var green = [[678,1949,18],[798,1786,32],[802,1857,30],[1213,1804,30],[960,1856,27],[1286,1821,30],[1350,1811,28],[1286,1879,27],[1358,1869,26],[753,1889,24],[869,1891,22],[1005,1889,24],[1136,1889,23],[1481,1886,25],[1511,1876,22],[1553,1867,25],[1691,1802,31],[1769,1843,29],[1764,1903,24],[2173,1758,34],[1840,1867,28],[2039,1860,25],[2246,1857,27],[2311,1811,28],[2317,1881,25],[2095,1886,22],[1917,1896,22],[1622,1908,24],[2246,1908,24],[822,1910,24],[860,1935,20],[1050,1910,22],[1300,1925,24],[1305,1885,25],[1500,1920,25],[2145,1900,22],[1768,1955,20],[1005,1920,20],[1140,1915,20],[1560,1905,22],[1630,1930,20],[2000,1920,20],[2320,1915,22]];
  var blue = [[811,1954,20],[939,1954,20],[1076,1954,20],[1211,1913,22],[1224,1952,17],[1420,1952,18],[733,1966,15],[805,1982,14],[1018,1976,14],[1207,1966,15],[1511,1961,16],[1565,1927,20],[1632,1949,18],[1703,1926,20],[1714,1944,18],[1907,1923,22],[1898,1949,20],[1968,1954,18],[2046,1926,20],[2169,1942,20],[2200,1942,18],[2376,1954,21],[2387,1920,20],[2319,1969,16],[1837,1968,17]];

  var i, x, y;
  red.forEach(function (c) { add('b-red', c); });
  for (i = 0; i < 95; i++) {
    x = dayX(); y = 1920 + rnd() * 95;
    add('b-red', [x, y, 7 + (2039 - y) * 0.13]);
  }
  dark.forEach(function (c) { add('b-dark', c); });
  for (i = 0; i < 540; i++) {
    x = dayX(); y = 2032 - Math.pow(rnd(), 1.9) * 125;
    add('b-green', [x, y, 5 + (2039 - y) * 0.16]);
  }
  green.forEach(function (c) { add('b-green', c); });
  for (i = 0; i < 100; i++) {
    x = dayX(); y = 2025 - Math.pow(rnd(), 1.1) * 70;
    add('b-blue', [x, y, 5 + (2039 - y) * 0.17]);
  }
  blue.forEach(function (c) { add('b-blue', c); });
})();
```
